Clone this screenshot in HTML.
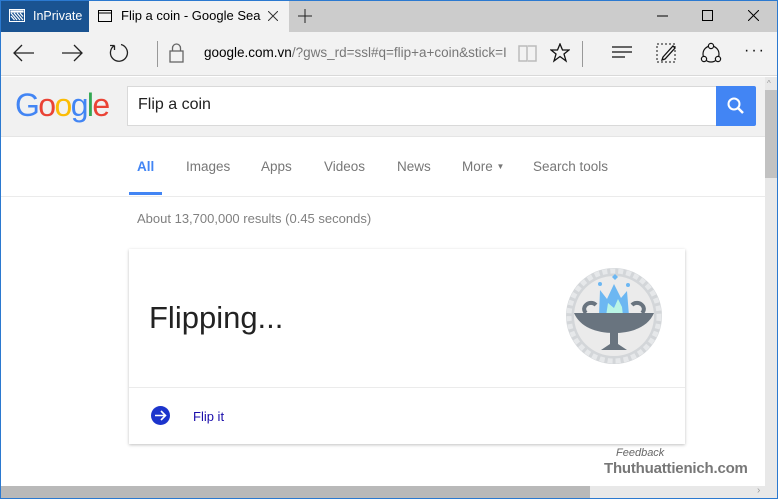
<!DOCTYPE html>
<html><head><meta charset="utf-8"><style>
*{margin:0;padding:0;box-sizing:border-box}
body{width:778px;height:499px;overflow:hidden;font-family:"Liberation Sans",Arial,sans-serif;background:#fff;position:relative}
.a{position:absolute}
</style></head><body>
<div class="a" style="left:0;top:0;width:778px;height:499px;border:1px solid #2b79d0;z-index:50;pointer-events:none"></div>
<div class="a" style="left:0;top:0;width:778px;height:32px;background:#cccccc"></div>
<div class="a" style="left:0;top:0;width:89px;height:32px;background:#1a5391;color:#fff;font-size:12.5px">
 <svg class="a" style="left:9px;top:9px" width="16" height="13" viewBox="0 0 16 13"><rect x="0.5" y="0.5" width="15" height="12" fill="none" stroke="#fff"/><path d="M2 2h12v1H2zM2 4l6 7M5 4l6 7M8 4l6 7M11 4l3 3.5M2 7l3.5 4" stroke="#fff" stroke-width="1.2"/></svg>
 <span class="a" style="left:33px;top:9px">InPrivate</span></div>
<div class="a" style="left:89px;top:0;width:200px;height:32px;background:#f2f2f2;font-size:13px;color:#000">
 <svg class="a" style="left:9px;top:10px" width="14" height="12"><rect x="0.5" y="0.5" width="13" height="11" fill="none" stroke="#000"/><line x1="0" y1="3" x2="14" y2="3" stroke="#000"/></svg>
 <span class="a" style="left:32px;top:8px">Flip a coin - Google Sea</span>
 <svg class="a" style="left:179px;top:11px" width="10" height="10"><path d="M0 0L10 10M10 0L0 10" stroke="#333"/></svg></div>
<svg class="a" style="left:298px;top:9px" width="14" height="14"><path d="M7 0V14M0 7H14" stroke="#222"/></svg>
<svg class="a" style="left:657px;top:15px" width="11" height="2"><path d="M0 1H11" stroke="#000"/></svg>
<svg class="a" style="left:702px;top:10px" width="11" height="11"><rect x="0.5" y="0.5" width="10" height="10" fill="none" stroke="#000"/></svg>
<svg class="a" style="left:748px;top:10px" width="11" height="11"><path d="M0 0L11 11M11 0L0 11" stroke="#000"/></svg>
<div class="a" style="left:0;top:32px;width:778px;height:44px;background:#f2f2f2;border-bottom:1px solid #d9d9d9"></div>
<svg class="a" style="left:13px;top:44px" width="22" height="18"><path d="M21 9H1M9 1L1 9l8 8" fill="none" stroke="#222" stroke-width="1.3"/></svg>
<svg class="a" style="left:61px;top:44px" width="22" height="18"><path d="M1 9H21M13 1l8 8-8 8" fill="none" stroke="#222" stroke-width="1.3"/></svg>
<svg class="a" style="left:108px;top:42px" width="22" height="22"><path d="M6.5 3.5A8.5 8.5 0 1 0 13 2.5M6.5 3.5V8M6.5 3.5H2" fill="none" stroke="#222" stroke-width="1.3"/></svg>
<div class="a" style="left:157px;top:41px;width:1px;height:26px;background:#999"></div>
<svg class="a" style="left:169px;top:43px" width="15" height="20"><rect x="1" y="8" width="13" height="11" fill="none" stroke="#666" stroke-width="1.3"/><path d="M3.5 8V5a4 4 0 0 1 8 0v3" fill="none" stroke="#666" stroke-width="1.3"/></svg>
<div class="a" style="left:204px;top:45px;font-size:13.5px;color:#000;white-space:nowrap">google.com.vn<span style="color:#777">/?gws_rd=ssl#q=flip+a+coin&amp;stick=I</span></div>
<svg class="a" style="left:518px;top:44px" width="20" height="18"><path d="M1 2h8v15H1zM10 2h8v15h-8" fill="none" stroke="#bbb" stroke-width="1.5"/></svg>
<svg class="a" style="left:550px;top:43px" width="20" height="20"><path d="M10 1l2.5 6h6.5l-5 4 2 7-6-4.5-6 4.5 2-7-5-4h6.5z" fill="none" stroke="#111" stroke-width="1.3"/></svg>
<div class="a" style="left:582px;top:41px;width:1px;height:26px;background:#999"></div>
<svg class="a" style="left:612px;top:46px" width="22" height="14"><path d="M0 1H20M0 6H20M0 11H13" stroke="#111" stroke-width="1.3"/></svg>
<svg class="a" style="left:656px;top:43px" width="22" height="21"><rect x="1" y="1" width="18" height="18" fill="none" stroke="#111" stroke-dasharray="2 2"/><path d="M7 14L17 3l2 2L9 16l-3 1z" fill="none" stroke="#111" stroke-width="1.3"/></svg>
<svg class="a" style="left:700px;top:42px" width="22" height="22"><circle cx="11" cy="12" r="8" fill="none" stroke="#111" stroke-width="1.2"/><circle cx="11" cy="4" r="2.6" fill="#f2f2f2" stroke="#111" stroke-width="1.2"/><circle cx="4" cy="17" r="2.6" fill="#f2f2f2" stroke="#111" stroke-width="1.2"/><circle cx="18" cy="17" r="2.6" fill="#f2f2f2" stroke="#111" stroke-width="1.2"/></svg>
<div class="a" style="left:744px;top:42px;font-size:16px;letter-spacing:2px;color:#111">···</div>
<div class="a" style="left:1px;top:77px;width:764px;height:60px;background:#f1f1f1;border-bottom:1px solid #e5e5e5"></div>
<div class="a" style="left:15px;top:85px;font-size:32px;font-family:'Liberation Sans',sans-serif;letter-spacing:-1.6px;line-height:40px"><span style="color:#4285f4">G</span><span style="color:#ea4335">o</span><span style="color:#fbbc05">o</span><span style="color:#4285f4">g</span><span style="color:#34a853">l</span><span style="color:#ea4335">e</span></div>
<div class="a" style="left:127px;top:86px;width:590px;height:40px;background:#fff;border:1px solid #d9d9d9;border-right:none"></div>
<div class="a" style="left:138px;top:96px;font-size:16px;color:#222">Flip a coin</div>
<div class="a" style="left:716px;top:86px;width:40px;height:40px;background:#4285f4;border-radius:0 2px 2px 0"></div>
<svg class="a" style="left:726px;top:96px" width="20" height="20"><circle cx="8" cy="8" r="5.5" fill="none" stroke="#fff" stroke-width="2"/><path d="M12 12l5 5" stroke="#fff" stroke-width="2.5"/></svg>
<div class="a" style="left:1px;top:196px;width:764px;height:1px;background:#ebebeb"></div>
<div class="a" style="top:159px;left:0;font-size:13.5px;color:#777;width:700px">
<span class="a" style="left:137px;color:#4285f4;font-weight:bold">All</span>
<span class="a" style="left:186px">Images</span>
<span class="a" style="left:261px">Apps</span>
<span class="a" style="left:324px">Videos</span>
<span class="a" style="left:397px">News</span>
<span class="a" style="left:462px;white-space:nowrap">More <span style="font-size:8px;position:relative;top:-2px">▼</span></span>
<span class="a" style="left:533px;white-space:nowrap">Search tools</span></div>
<div class="a" style="left:129px;top:192px;width:33px;height:3px;background:#4285f4"></div>
<div class="a" style="left:137px;top:211px;font-size:13px;color:#808080">About 13,700,000 results (0.45 seconds)</div>
<div class="a" style="left:129px;top:249px;width:556px;height:195px;background:#fff;box-shadow:0 1px 3px rgba(0,0,0,.25)"></div>
<div class="a" style="left:129px;top:387px;width:556px;height:1px;background:#ebebeb"></div>
<div class="a" style="left:149px;top:300px;font-size:31px;color:#222">Flipping...</div>
<svg class="a" style="left:566px;top:268px" width="96" height="96" viewBox="0 0 96 96">
<circle cx="48" cy="48" r="48" fill="#d3d6d9"/><circle cx="48" cy="48" r="45" fill="none" stroke="#e6e8ea" stroke-width="5" stroke-dasharray="5 3"/>
<circle cx="48" cy="48" r="40" fill="#ebebeb"/>
<path d="M33 48L34 22l7 9 7-15 7 14 6-7 2 25z" fill="#6cb7f2"/><path d="M40 48l2-13 6 5 4-9 4 8 1 9z" fill="#b9f5e6"/>
<path d="M49 6l3 3-3 3-3-3z" fill="#6cb7f2"/><circle cx="34" cy="16" r="2" fill="#6cb7f2"/><circle cx="62" cy="17" r="2" fill="#6cb7f2"/>
<path d="M8 45h80c-6 14-22 20-40 20S14 59 8 45z" fill="#69747f"/>
<path d="M20 45c-6-6 4-14 10-8M76 45c6-6-4-14-10-8" fill="none" stroke="#69747f" stroke-width="4"/>
<path d="M44 64h8v12l9 6H35l9-6z" fill="#69747f"/></svg>
<svg class="a" style="left:150px;top:405px" width="21" height="21"><circle cx="10.5" cy="10.5" r="9.5" fill="#1c34cc"/><path d="M5 10.5h10M11 6l4.5 4.5L11 15" fill="none" stroke="#fff" stroke-width="1.6"/></svg>
<div class="a" style="left:193px;top:409px;font-size:13px;color:#1a0dab">Flip it</div>
<div class="a" style="left:616px;top:447px;font-size:11px;color:#666;font-style:italic">Feedback</div>
<div class="a" style="left:604px;top:460px;font-size:15px;color:#777;font-weight:bold;letter-spacing:-0.2px">Thuthuattienich.com</div>
<div class="a" style="left:765px;top:77px;width:12px;height:409px;background:#e8e8e8"></div>
<div class="a" style="left:765px;top:90px;width:12px;height:88px;background:#c2c2c2"></div>
<div class="a" style="left:767px;top:79px;font-size:8px;color:#999">^</div>
<div class="a" style="left:1px;top:486px;width:777px;height:12px;background:#e8e8e8"></div>
<div class="a" style="left:1px;top:486px;width:589px;height:12px;background:#b9b9b9"></div>
<div class="a" style="left:757px;top:485px;font-size:10px;color:#999">›</div>
</body></html>
